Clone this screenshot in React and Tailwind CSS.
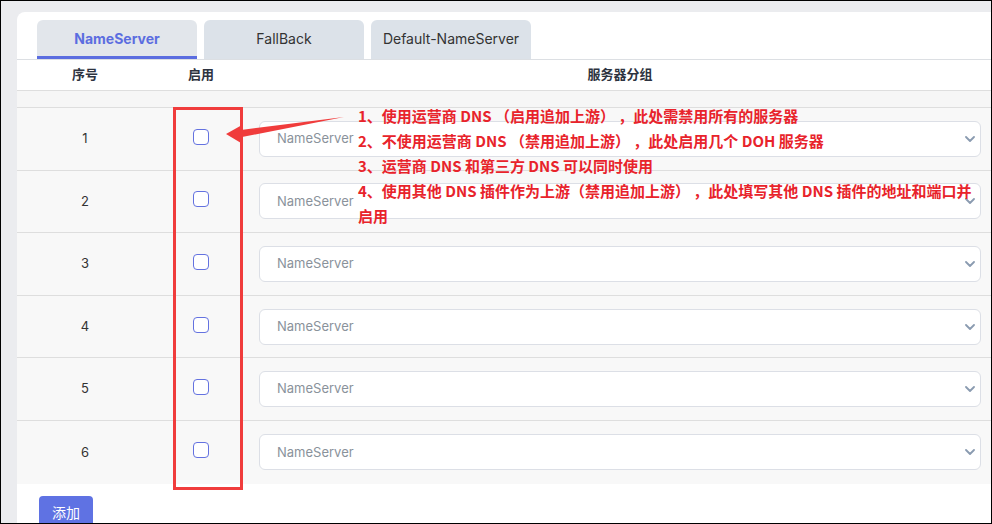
import React from "react";

const rows = [1, 2, 3, 4, 5, 6];

function Chevron() {
  return (
    <svg width="10" height="6" viewBox="0 0 10 6" className="shrink-0">
      <path d="M1 1 L5 5 L9 1" fill="none" stroke="#8a9bb0" strokeWidth="1.8" strokeLinecap="round" strokeLinejoin="round" />
    </svg>
  );
}

export default function App() {
  return (
    <div className="relative w-[992px] h-[524px] overflow-hidden border border-black bg-[#ebecef] font-['Inter','Noto_Sans_CJK_SC',sans-serif]">
      <div className="ml-[16px] mt-[11px] h-[600px] rounded-tl-lg bg-white">
        {/* tabs */}
        <div className="flex gap-[7px] pl-[20px] pt-[8px] border-b border-[#dcdfe3]">
          <div className="flex h-[39px] w-[160px] items-center justify-center rounded-t-md border-b-[3px] border-[#5b6de0] bg-[#e2e6eb] text-[14px] font-bold text-[#5b6de0]">
            NameServer
          </div>
          <div className="flex h-[39px] w-[160px] items-center justify-center rounded-t-md bg-[#dce2e9] pb-[3px] text-[14px] text-[#333]">
            FallBack
          </div>
          <div className="flex h-[39px] w-[160px] items-center justify-center rounded-t-md bg-[#dce2e9] pb-[3px] text-[14px] text-[#333]">
            Default-NameServer
          </div>
        </div>
        {/* header */}
        <div className="flex h-[31px] items-center border-b border-[#dedede] text-[13px] font-bold text-[#2d3340]">
          <div className="w-[136px] text-center">序号</div>
          <div className="w-[96px] text-center">启用</div>
          <div className="flex-1 text-center">服务器分组</div>
        </div>
        <div className="h-[17px] border-b border-[#dedede] bg-[#f6f6f6]" />
        {rows.map((n, i) => (
          <div
            key={n}
            className={
              "flex h-[62.6px] items-center bg-[#f8f8f8] text-[13px] text-[#333] " +
              (i < rows.length - 1 ? "border-b border-[#dedede]" : "")
            }
          >
            <div className="w-[136px] text-center">{n}</div>
            <div className="flex w-[96px] justify-center">
              <div className="-mt-[4px] h-[16px] w-[16px] rounded-[4px] border-[1.5px] border-[#6472e0] bg-white" />
            </div>
            <div className="flex-1 px-[10px]">
              <div className="flex h-[36px] items-center justify-between rounded-md border border-[#dcdfe6] bg-white pl-[17px] pr-[5px] text-[13px] text-[#8a929b]">
                <span>NameServer</span>
                <Chevron />
              </div>
            </div>
          </div>
        ))}
        <div className="pl-[22px] pt-[12px]">
          <div className="flex h-[34px] w-[54px] items-center justify-center rounded-[4px] bg-[#5f72e3] text-[14px] text-white">
            添加
          </div>
        </div>
      </div>

      {/* annotations */}
      <svg className="absolute left-[-1px] top-[-1px] h-[524px] w-[992px]" viewBox="0 0 992 524">
        <rect x="174.5" y="108.5" width="67" height="380" fill="none" stroke="#f03c3c" strokeWidth="3" />
        <polygon points="226,134 242,125 241,130 344,117 242,137 241,143" fill="#f03c3c" />
      </svg>
      <div className="absolute left-[357px] top-[102px] whitespace-nowrap text-[15px] font-bold leading-[25px] text-[#e8232b] font-['Noto_Sans_CJK_SC','Inter',sans-serif]">
        <div>1、使用运营商 DNS （启用追加上游） ，此处需禁用所有的服务器</div>
        <div>2、不使用运营商 DNS （禁用追加上游） ，此处启用几个 DOH 服务器</div>
        <div>3、运营商 DNS 和第三方 DNS 可以同时使用</div>
        <div>4、使用其他 DNS 插件作为上游（禁用追加上游） ，此处填写其他 DNS 插件的地址和端口并</div>
        <div>启用</div>
      </div>
    </div>
  );
}
